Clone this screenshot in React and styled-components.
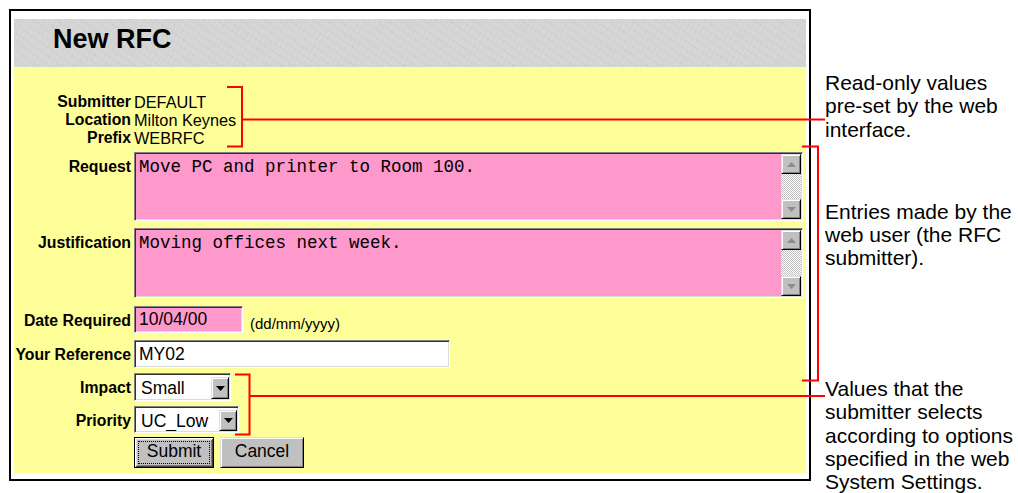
import React from "react";
import styled, { createGlobalStyle } from "styled-components";

const GlobalStyle = createGlobalStyle`
  html, body {
    margin: 0;
    padding: 0;
    background: #fff;
    overflow: hidden;
  }
  body {
    font-family: "Liberation Sans", Arial, sans-serif;
    color: #000;
  }
`;

const SANS = `"Liberation Sans", Arial, sans-serif`;
const MONO = `"Liberation Mono", "Courier New", monospace`;

const Page = styled.div`
  position: relative;
  display: flex;
  align-items: flex-start;
  width: 1018px;
  height: 493px;
  box-sizing: border-box;
  padding: 9px 0 0 9px;
`;

const Frame = styled.div`
  width: 802px;
  flex: none;
  box-sizing: border-box;
  border: 2px solid #000;
  padding: 8px 3px 6px;
  background: #fff;
`;

const TitleBar = styled.div`
  height: 48px;
  box-sizing: border-box;
  padding: 5px 0 0 39px;
  background-color: #d4d4d4;
  background-image:
    repeating-linear-gradient(115deg, rgba(255,255,255,0.1) 0 1px, transparent 1px 5px),
    repeating-linear-gradient(35deg, rgba(0,0,0,0.03) 0 1px, transparent 1px 7px);
  font: bold 27px/31px ${SANS};
`;

const FormBody = styled.form`
  display: flex;
  flex-direction: column;
  background: #ffff99;
  padding: 26px 0 5px;
  margin: 0;
`;

const Row = styled.div`
  display: flex;
  align-items: flex-start;
  gap: 3px;
  margin-top: ${(p) => p.$mt ?? 0}px;
`;

const Label = styled.label`
  width: 117px;
  flex: none;
  box-sizing: border-box;
  text-align: right;
  white-space: nowrap;
  font: bold 15.8px/18px ${SANS};
  padding-top: ${(p) => p.$pt ?? 6}px;
`;

const Value = styled.span`
  font: 16.3px/18px ${SANS};
  white-space: nowrap;
`;

const sunken = `
  border: 1px solid;
  border-color: #808080 #ffffff #ffffff #808080;
  box-shadow: inset 1px 1px #303030, inset -1px -1px #dcdcdc;
`;

const raised = `
  background: #c0c0c0;
  border: 1px solid;
  border-color: #dfdfdf #000000 #000000 #dfdfdf;
  box-shadow: inset 1px 1px #ffffff, inset -1px -1px #808080;
`;

const TextBox = styled.div`
  display: flex;
  width: 669px;
  height: ${(p) => p.$h}px;
  box-sizing: border-box;
  ${sunken}
  padding: 1px;
  background: #ff99cc;
`;

const TextArea = styled.textarea`
  flex: 1;
  min-width: 0;
  margin: 0;
  border: none;
  outline: none;
  resize: none;
  overflow: hidden;
  background: transparent;
  color: #000;
  font: 17.5px/20px ${MONO};
  padding: 3px 3px 0;
`;

const ScrollBar = styled.div`
  width: 20px;
  flex: none;
  display: flex;
  flex-direction: column;
`;

const ScrollButton = styled.div`
  height: 20px;
  flex: none;
  box-sizing: border-box;
  display: flex;
  align-items: center;
  justify-content: center;
  ${raised}
`;

const Track = styled.div`
  flex: 1;
  background: repeating-conic-gradient(#c0c0c0 0 25%, #ffffff 0 50%) 0 0 / 2px 2px;
`;

const Field = styled.input`
  box-sizing: border-box;
  width: ${(p) => p.$w}px;
  height: ${(p) => p.$h}px;
  margin: 0;
  padding: 0 4px;
  ${sunken}
  background: ${(p) => p.$bg};
  color: #000;
  outline: none;
  font: 17.5px/20px ${SANS};
`;

const Hint = styled.span`
  font: 15px/18px ${SANS};
  padding: 9px 0 0 4px;
  white-space: nowrap;
`;

const SelectBox = styled.div`
  display: flex;
  width: ${(p) => p.$w}px;
  height: ${(p) => p.$h}px;
  box-sizing: border-box;
  ${sunken}
  background: #fff;
  padding: 3px 1px 1px 6px;
`;

const Select = styled.select`
  flex: 1;
  min-width: 0;
  appearance: none;
  -webkit-appearance: none;
  border: none;
  outline: none;
  background: transparent;
  margin: 0;
  padding: 0;
  color: #000;
  font: 17.5px/20px ${SANS};
`;

const DropButton = styled.span`
  width: 18px;
  flex: none;
  box-sizing: border-box;
  display: flex;
  align-items: center;
  justify-content: center;
  ${raised}
`;

const Button = styled.button`
  width: ${(p) => p.$w}px;
  height: 31px;
  box-sizing: border-box;
  margin: 0;
  padding: 0 0 3px;
  font: 17.5px/20px ${SANS};
  color: #000;
  cursor: default;
  background: #c0c0c0;
  ${(p) =>
    p.$default
      ? `
    border: 1px solid #000;
    box-shadow: inset 1px 1px #ffffff, inset -1px -1px #404040,
      inset 2px 2px #dfdfdf, inset -2px -2px #808080;
    outline: 1px dotted #000;
    outline-offset: -5px;
  `
      : `
    border: 1px solid;
    border-color: #dfdfdf #000000 #000000 #dfdfdf;
    box-shadow: inset 1px 1px #ffffff, inset -1px -1px #808080;
    outline: none;
  `}
`;

const ButtonRow = styled.div`
  display: flex;
  gap: 6px;
  margin: 4px 0 0 120px;
`;

const Notes = styled.aside`
  margin-left: 14px;
  display: flex;
  flex-direction: column;
  font: 21px/23.33px ${SANS};
  white-space: nowrap;
`;

const Note = styled.p`
  margin: ${(p) => p.$mt}px 0 0;
`;

const Callouts = styled.svg`
  position: absolute;
  left: 0;
  top: 0;
  pointer-events: none;
`;

const ArrowUp = ({ color }) => (
  <svg width="9" height="5" viewBox="0 0 9 5">
    <path d="M4.5 0 L9 5 L0 5 Z" fill={color} />
  </svg>
);

const ArrowDown = ({ color }) => (
  <svg width="9" height="5" viewBox="0 0 9 5">
    <path d="M0 0 L9 0 L4.5 5 Z" fill={color} />
  </svg>
);

function MemoField({ label, text, height }) {
  return (
    <>
      <Label>{label}</Label>
      <TextBox $h={height}>
        <TextArea defaultValue={text} spellCheck={false} />
        <ScrollBar>
          <ScrollButton>
            <ArrowUp color="#8c8c8c" />
          </ScrollButton>
          <Track />
          <ScrollButton>
            <ArrowDown color="#8c8c8c" />
          </ScrollButton>
        </ScrollBar>
      </TextBox>
    </>
  );
}

function DropDown({ width, height, value, options }) {
  return (
    <SelectBox $w={width} $h={height}>
      <Select defaultValue={value}>
        {options.map((o) => (
          <option key={o}>{o}</option>
        ))}
      </Select>
      <DropButton>
        <ArrowDown color="#000" />
      </DropButton>
    </SelectBox>
  );
}

const readOnly = [
  ["Submitter", "DEFAULT"],
  ["Location", "Milton Keynes"],
  ["Prefix", "WEBRFC"],
];

export default function App() {
  return (
    <>
      <GlobalStyle />
      <Page>
        <Frame>
          <TitleBar>New RFC</TitleBar>
          <FormBody onSubmit={(e) => e.preventDefault()}>
            {readOnly.map(([k, v]) => (
              <Row key={k}>
                <Label $pt={0}>{k}</Label>
                <Value>{v}</Value>
              </Row>
            ))}
            <Row $mt={5}>
              <MemoField label="Request" text="Move PC and printer to Room 100." height={69} />
            </Row>
            <Row $mt={7}>
              <MemoField label="Justification" text="Moving offices next week." height={70} />
            </Row>
            <Row $mt={8}>
              <Label>Date Required</Label>
              <Field $w={109} $h={27} $bg="#ff99cc" defaultValue="10/04/00" />
              <Hint>(dd/mm/yyyy)</Hint>
            </Row>
            <Row $mt={7}>
              <Label>Your Reference</Label>
              <Field $w={316} $h={28} $bg="#ffffff" defaultValue="MY02" />
            </Row>
            <Row $mt={5}>
              <Label>Impact</Label>
              <DropDown width={97} height={28} value="Small" options={["Small", "Medium", "Large"]} />
            </Row>
            <Row $mt={5}>
              <Label>Priority</Label>
              <DropDown width={105} height={27} value="UC_Low" options={["UC_Low", "UC_Medium", "UC_High"]} />
            </Row>
            <ButtonRow>
              <Button type="submit" $w={80} $default>
                Submit
              </Button>
              <Button type="button" $w={84}>
                Cancel
              </Button>
            </ButtonRow>
          </FormBody>
        </Frame>
        <Notes>
          <Note $mt={62}>
            Read-only values
            <br />
            pre-set by the web
            <br />
            interface.
          </Note>
          <Note $mt={58.6}>
            Entries made by the
            <br />
            web user (the RFC
            <br />
            submitter).
          </Note>
          <Note $mt={107.4}>
            Values that the
            <br />
            submitter selects
            <br />
            according to options
            <br />
            specified in the web
            <br />
            System Settings.
          </Note>
        </Notes>
        <Callouts width="1018" height="493" viewBox="0 0 1018 493">
          <g fill="none" stroke="#ff0000" strokeWidth="2">
            <path d="M227 87 H242 V146.5 H227" />
            <path d="M242 119.5 H825" />
            <path d="M802 146.5 H818 V380.5 H802" />
            <path d="M235 374.5 H249.5 V434.5 H235" />
            <path d="M249.5 396 H825" />
          </g>
        </Callouts>
      </Page>
    </>
  );
}
